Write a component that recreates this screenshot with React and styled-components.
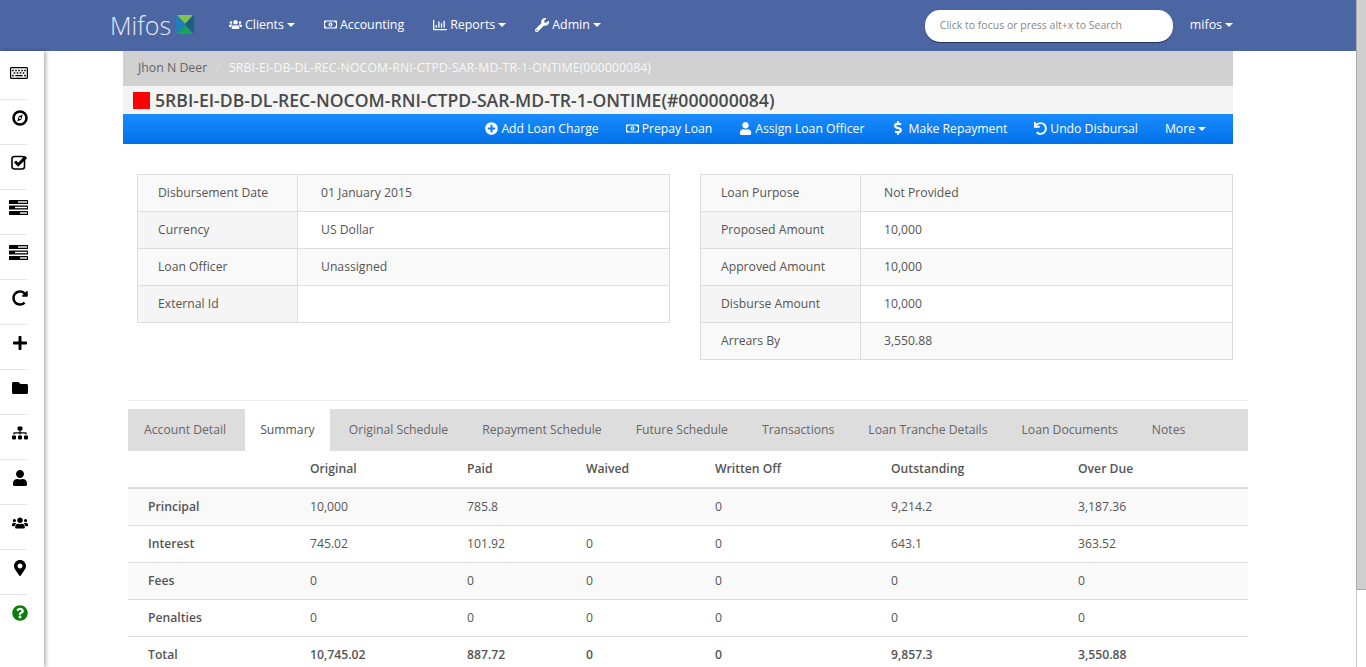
import React from "react";
import styled, { createGlobalStyle } from "styled-components";
import {
  FaRegKeyboard,
  FaRedoAlt,
  FaPlus,
  FaFolder,
  FaSitemap,
  FaUser,
  FaUsers,
  FaMapMarkerAlt,
  FaQuestionCircle,
  FaRegMoneyBillAlt,
  FaRegChartBar,
  FaWrench,
  FaPlusCircle,
  FaDollarSign,
  FaUndo,
} from "react-icons/fa";

const GlobalStyle = createGlobalStyle`
  html, body {
    margin: 0;
    padding: 0;
    height: 100%;
    overflow: hidden;
    background: #fff;
  }
  body {
    font-family: "Open Sans", "Liberation Sans", sans-serif;
    font-size: 12.2px;
    color: #555;
  }
`;

const Shell = styled.div`
  display: flex;
  height: 667px;
  overflow: hidden;
`;

const Window = styled.div`
  width: 1356px;
  flex: none;
  display: flex;
  flex-direction: column;
`;

const ScrollTrack = styled.div`
  width: 10px;
  flex: none;
  background: #fff;
  border-left: 1px solid #ccc;
  box-sizing: border-box;
`;

const ScrollThumb = styled.div`
  height: 590px;
  box-sizing: border-box;
  margin-left: -1px;
  background: #cfcfcf;
  border-left: 1px solid #aaa;
  border-bottom: 1px solid #aaa;
`;

const NavBar = styled.header`
  height: 51px;
  box-sizing: border-box;
  flex: none;
  background: #4c66a4;
  display: flex;
  align-items: center;
  padding: 0 0 2px 110px;
  color: #fff;
`;

const Logo = styled.div`
  display: flex;
  align-items: center;
  gap: 5px;
  width: 119px;
  font-size: 25px;
  font-weight: 300;
  color: #e4e9f3;
`;

const NavItem = styled.a`
  display: flex;
  align-items: center;
  gap: 3px;
  margin-right: 29px;
  font-size: 12.4px;
  color: #fff;
  svg {
    font-size: ${(p) => p.$icon || 14}px;
  }
`;

const Caret = styled.span`
  display: inline-block;
  width: 0;
  height: 0;
  margin-top: 1px;
  border-left: 4px solid transparent;
  border-right: 4px solid transparent;
  border-top: 4px solid #fff;
`;

const Search = styled.div`
  width: 248px;
  height: 32px;
  box-sizing: border-box;
  margin: 2px 0 0 auto;
  background: #fff;
  border-radius: 15px;
  box-shadow: 0 1px 1px rgba(0, 0, 0, 0.5);
  display: flex;
  align-items: center;
  padding: 0 0 2px 15px;
  font-size: 10.5px;
  color: #888;
`;

const UserMenu = styled(NavItem)`
  margin: 0 123px 0 17px;
`;

const Body = styled.div`
  flex: 1;
  display: flex;
  min-height: 0;
`;

const Sidebar = styled.nav`
  width: 44px;
  flex: none;
  padding-top: 4px;
  box-sizing: border-box;
  box-shadow: 2px 0 4px rgba(0, 0, 0, 0.3);
  z-index: 1;
`;

const SideItem = styled.div`
  height: 44px;
  width: 27px;
  box-sizing: content-box;
  border-bottom: ${(p) => (p.$last ? 0 : 1)}px solid #e4e4e4;
  display: flex;
  align-items: flex-start;
  justify-content: flex-end;
  color: ${(p) => p.$color || "#000"};
  font-size: ${(p) => p.$size || 16}px;
  svg {
    flex: none;
    margin-top: ${(p) => p.$top || 10}px;
    margin-right: -1px;
  }
`;

const Content = styled.main`
  flex: 1;
  min-width: 0;
  padding-left: 79px;
`;

const Crumbs = styled.div`
  width: 1110px;
  height: 35px;
  box-sizing: border-box;
  padding: 0 0 2px 15px;
  background: #d0d0d0;
  display: flex;
  align-items: center;
  font-size: 12.3px;
  color: #666;
`;

const CrumbSep = styled.span`
  color: #ddd;
  margin: 0 8px 0 9px;
`;

const CrumbActive = styled.span`
  color: #f8f8f8;
  letter-spacing: 0.08px;
`;

const TitleBar = styled.div`
  width: 1110px;
  height: 28px;
  box-sizing: border-box;
  padding-left: 10px;
  background: #f4f4f4;
  display: flex;
  align-items: center;
  gap: 5px;
  font-size: 17.6px;
  font-weight: 600;
  color: #4a4a4a;
`;

const StatusSquare = styled.span`
  width: 17px;
  height: 17px;
  background: #f00;
`;

const ActionBar = styled.div`
  width: 1110px;
  height: 30px;
  box-sizing: border-box;
  background: linear-gradient(#1a8cff, #0070e6);
  display: flex;
  align-items: center;
  justify-content: flex-end;
  gap: 27px;
  padding: 0 27px 2px 0;
  color: #fff;
  font-size: 12.2px;
`;

const Action = styled.a`
  display: flex;
  align-items: center;
  gap: 3px;
  svg {
    font-size: ${(p) => p.$icon || 13}px;
  }
`;

const InfoRow = styled.div`
  width: 1110px;
  display: flex;
  align-items: flex-start;
  justify-content: space-between;
  box-sizing: border-box;
  padding: 30px 0 0 14px;
`;

const InfoTable = styled.div`
  width: 533px;
  border: 1px solid #ddd;
  border-bottom: 0;
  box-sizing: border-box;
`;

const InfoLine = styled.div`
  display: grid;
  grid-template-columns: 160px 1fr;
  height: 37px;
  box-sizing: border-box;
  border-bottom: 1px solid #ddd;
  background: ${(p) => (p.$odd ? "#f9f9f9" : "#fff")};
`;

const InfoLabel = styled.div`
  display: flex;
  align-items: center;
  padding: 0 0 2px 20px;
  border-right: 1px solid #ddd;
  background: ${(p) => (p.$odd ? "#f9f9f9" : "#f5f5f5")};
`;

const InfoValue = styled.div`
  display: flex;
  align-items: center;
  padding: 0 0 2px 23px;
`;

const Lower = styled.section`
  width: 1120px;
  margin: 40px 0 0 5px;
  border-top: 1px solid #eee;
  padding-top: 8px;
`;

const Tabs = styled.div`
  height: 42px;
  box-sizing: border-box;
  background: #ddd;
  display: flex;
  gap: 4px;
  padding-left: 1px;
`;

const Tab = styled.div`
  display: flex;
  align-items: center;
  padding: 0 15px 2px;
  background: ${(p) => (p.$active ? "#fff" : "transparent")};
  color: ${(p) => (p.$active ? "#555" : "#666")};
`;

const SummaryGrid = styled.div`
  display: grid;
  grid-template-columns: 182px 157px 119px 129px 176px 187px 1fr;
`;

const HeadCell = styled.div`
  height: 38px;
  box-sizing: border-box;
  border-bottom: 2px solid #ddd;
  display: flex;
  align-items: center;
  padding-bottom: 2px;
  font-weight: 600;
`;

const Cell = styled.div`
  height: 37px;
  box-sizing: border-box;
  border-bottom: 1px solid #ddd;
  display: flex;
  align-items: center;
  padding-bottom: 2px;
  background: ${(p) => (p.$odd ? "#f9f9f9" : "#fff")};
  font-weight: ${(p) => (p.$bold ? 600 : 400)};
  padding-left: ${(p) => (p.$first ? 20 : 0)}px;
`;

const leftRows = [
  ["Disbursement Date", "01 January 2015"],
  ["Currency", "US Dollar"],
  ["Loan Officer", "Unassigned"],
  ["External Id", ""],
];

const rightRows = [
  ["Loan Purpose", "Not Provided"],
  ["Proposed Amount", "10,000"],
  ["Approved Amount", "10,000"],
  ["Disburse Amount", "10,000"],
  ["Arrears By", "3,550.88"],
];

const tabs = [
  "Account Detail",
  "Summary",
  "Original Schedule",
  "Repayment Schedule",
  "Future Schedule",
  "Transactions",
  "Loan Tranche Details",
  "Loan Documents",
  "Notes",
];

const columns = ["", "Original", "Paid", "Waived", "Written Off", "Outstanding", "Over Due"];

const summary = [
  ["Principal", "10,000", "785.8", "", "0", "9,214.2", "3,187.36"],
  ["Interest", "745.02", "101.92", "0", "0", "643.1", "363.52"],
  ["Fees", "0", "0", "0", "0", "0", "0"],
  ["Penalties", "0", "0", "0", "0", "0", "0"],
  ["Total", "10,745.02", "887.72", "0", "0", "9,857.3", "3,550.88"],
];

const MifosMark = () => (
  <svg width="18" height="19" viewBox="0 0 18 19">
    <polygon points="0,0 9,9.5 0,19" fill="#1d7fc0" />
    <polygon points="18,0 9,9.5 18,19" fill="#17627f" />
    <polygon points="1,0 17,0 9,8.5" fill="#7fc54a" />
    <polygon points="1,19 17,19 9,10.5" fill="#12a85a" />
  </svg>
);

const CompassIcon = () => (
  <svg width="16" height="16" viewBox="0 0 16 16">
    <circle cx="8" cy="8" r="6.5" fill="none" stroke="#000" strokeWidth="2.6" />
    <polygon points="10.6,4.6 9.4,9.4 5.4,11.4 6.6,6.6" fill="#000" />
    <circle cx="8" cy="8" r="1" fill="#fff" />
  </svg>
);

const CheckIcon = () => (
  <svg width="17" height="15" viewBox="0 0 17 15">
    <rect x="1" y="1.5" width="12.5" height="12.5" rx="2.5" fill="none" stroke="#000" strokeWidth="1.6" />
    <path d="M4 6.5 L7.2 9.7 L15 1.9" fill="none" stroke="#000" strokeWidth="3" />
  </svg>
);

const BarsIcon = () => (
  <svg width="19" height="15" viewBox="0 0 19 15">
    <rect x="0" y="0" width="19" height="4" rx="0.6" fill="#000" />
    <rect x="0" y="5.5" width="19" height="4" rx="0.6" fill="#000" />
    <rect x="0" y="11" width="19" height="4" rx="0.6" fill="#000" />
    <rect x="9" y="1.3" width="9" height="1.4" fill="#fff" />
    <rect x="6" y="6.8" width="12" height="1.4" fill="#fff" />
    <rect x="11" y="12.3" width="7" height="1.4" fill="#fff" />
  </svg>
);

const sideItems = [
  { icon: <FaRegKeyboard />, size: 18, top: 9 },
  { icon: <CompassIcon /> },
  { icon: <CheckIcon /> },
  { icon: <BarsIcon /> },
  { icon: <BarsIcon /> },
  { icon: <FaRedoAlt /> },
  { icon: <FaPlus /> },
  { icon: <FaFolder /> },
  { icon: <FaSitemap /> },
  { icon: <FaUser /> },
  { icon: <FaUsers /> },
  { icon: <FaMapMarkerAlt /> },
  { icon: <FaQuestionCircle />, color: "#0a7d0a", last: true },
];

export default function App() {
  return (
    <Shell>
      <GlobalStyle />
      <Window>
        <NavBar>
          <Logo>
            Mifos
            <MifosMark />
          </Logo>
          <NavItem $icon={13}>
            <FaUsers /> Clients <Caret />
          </NavItem>
          <NavItem $icon={13}>
            <FaRegMoneyBillAlt /> Accounting
          </NavItem>
          <NavItem>
            <FaRegChartBar /> Reports <Caret />
          </NavItem>
          <NavItem>
            <FaWrench /> Admin <Caret />
          </NavItem>
          <Search>Click to focus or press alt+x to Search</Search>
          <UserMenu>
            mifos <Caret />
          </UserMenu>
        </NavBar>
        <Body>
          <Sidebar>
            {sideItems.map((item, i) => (
              <SideItem key={i} $size={item.size} $top={item.top} $color={item.color} $last={item.last}>
                {item.icon}
              </SideItem>
            ))}
          </Sidebar>
          <Content>
            <Crumbs>
              Jhon N Deer
              <CrumbSep>/</CrumbSep>
              <CrumbActive>5RBI-EI-DB-DL-REC-NOCOM-RNI-CTPD-SAR-MD-TR-1-ONTIME(000000084)</CrumbActive>
            </Crumbs>
            <TitleBar>
              <StatusSquare />
              5RBI-EI-DB-DL-REC-NOCOM-RNI-CTPD-SAR-MD-TR-1-ONTIME(#000000084)
            </TitleBar>
            <ActionBar>
              <Action>
                <FaPlusCircle /> Add Loan Charge
              </Action>
              <Action>
                <FaRegMoneyBillAlt /> Prepay Loan
              </Action>
              <Action>
                <FaUser /> Assign Loan Officer
              </Action>
              <Action $icon={14}>
                <FaDollarSign /> Make Repayment
              </Action>
              <Action>
                <FaUndo /> Undo Disbursal
              </Action>
              <Action>
                More <Caret />
              </Action>
            </ActionBar>
            <InfoRow>
              <InfoTable>
                {leftRows.map(([k, v], i) => (
                  <InfoLine key={k} $odd={i % 2 === 0}>
                    <InfoLabel $odd={i % 2 === 0}>{k}</InfoLabel>
                    <InfoValue>{v}</InfoValue>
                  </InfoLine>
                ))}
              </InfoTable>
              <InfoTable>
                {rightRows.map(([k, v], i) => (
                  <InfoLine key={k} $odd={i % 2 === 0}>
                    <InfoLabel $odd={i % 2 === 0}>{k}</InfoLabel>
                    <InfoValue>{v}</InfoValue>
                  </InfoLine>
                ))}
              </InfoTable>
            </InfoRow>
            <Lower>
              <Tabs>
                {tabs.map((t) => (
                  <Tab key={t} $active={t === "Summary"}>
                    {t}
                  </Tab>
                ))}
              </Tabs>
              <SummaryGrid>
                {columns.map((c) => (
                  <HeadCell key={c || "blank"}>{c}</HeadCell>
                ))}
                {summary.map((row, r) =>
                  row.map((v, c) => (
                    <Cell key={r + "-" + c} $odd={r === 0 || r === 2} $bold={c === 0 || r === 4} $first={c === 0}>
                      {v}
                    </Cell>
                  ))
                )}
              </SummaryGrid>
            </Lower>
          </Content>
        </Body>
      </Window>
      <ScrollTrack>
        <ScrollThumb />
      </ScrollTrack>
    </Shell>
  );
}
